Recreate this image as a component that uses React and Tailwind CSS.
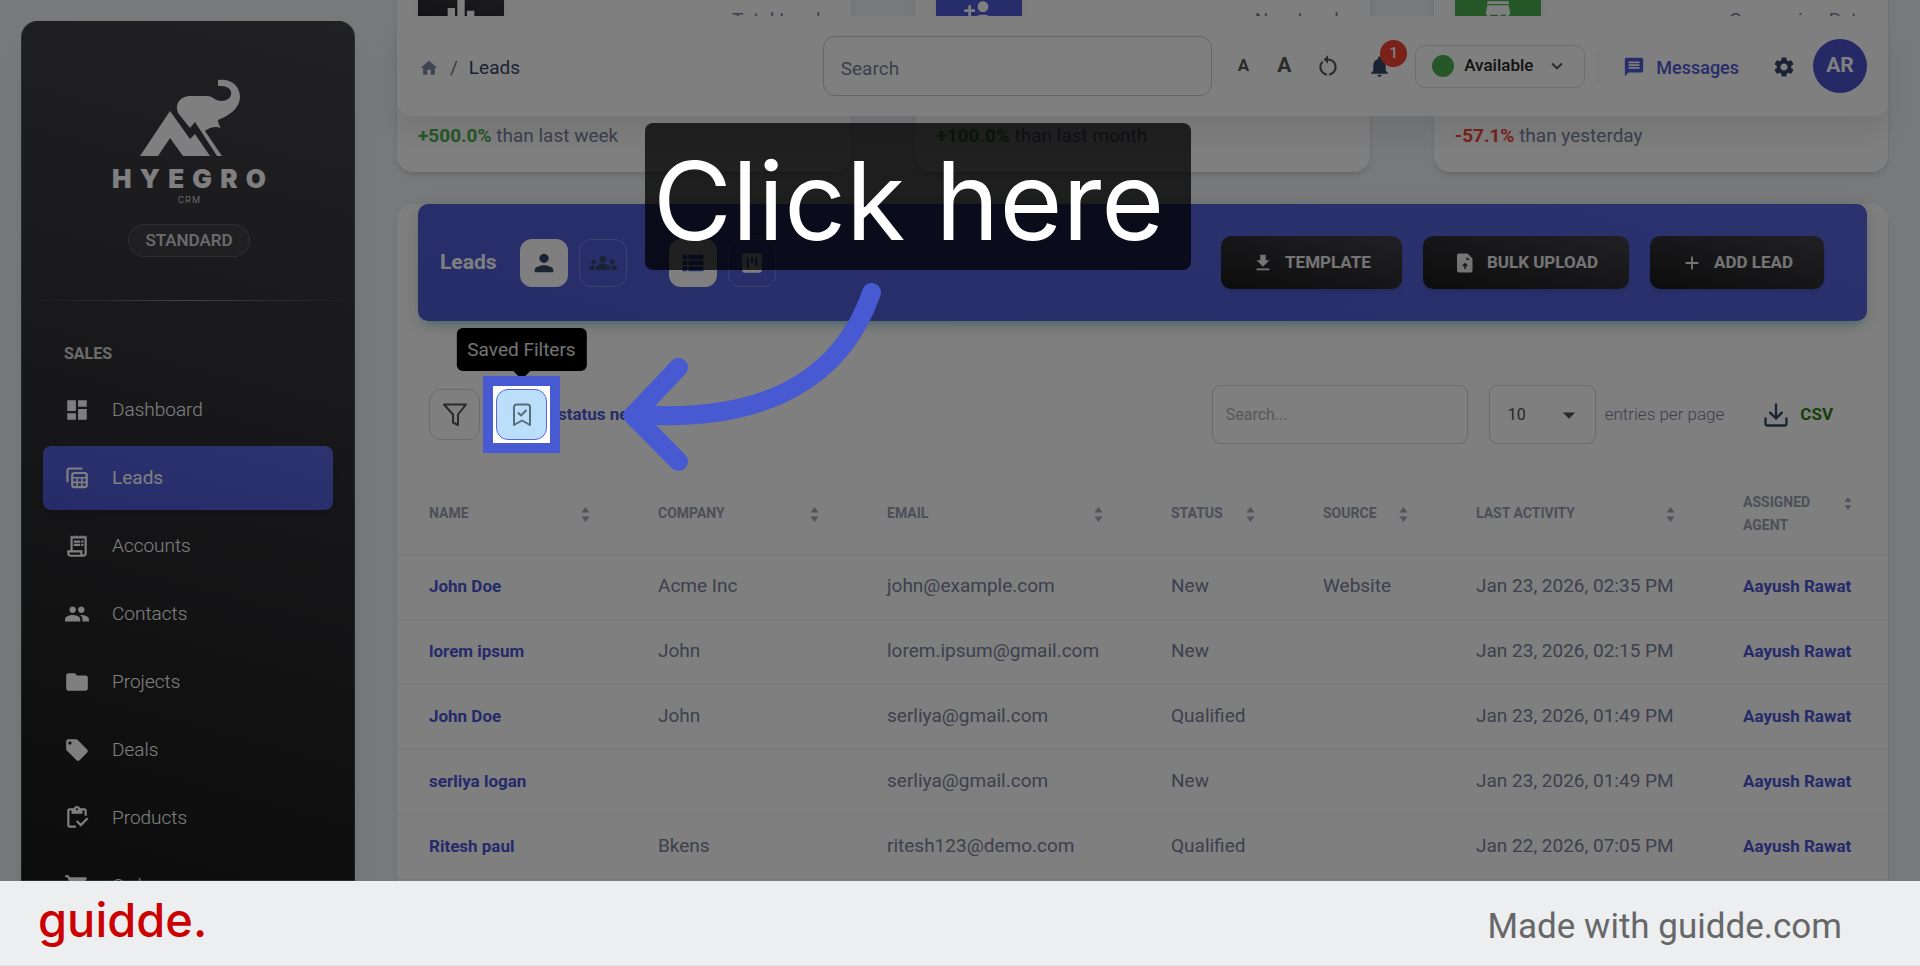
import React from 'react';
import {
  MdAdd,
  MdArrowDropDown,
  MdDashboard,
  MdDownload,
  MdFolder,
  MdGroups,
  MdHome,
  MdKeyboardArrowDown,
  MdLeaderboard,
  MdLocalOffer,
  MdMessage,
  MdNotifications,
  MdOutlineInventory,
  MdOutlineReceiptLong,
  MdPeople,
  MdPerson,
  MdPersonAdd,
  MdRestartAlt,
  MdSettings,
  MdShoppingCart,
  MdStore,
  MdViewKanban,
  MdViewList,
} from 'react-icons/md';
import { Download } from 'lucide-react';

const TablesIcon = ({ size = 26 }) => (
  <svg width={size} height={size} viewBox="0 0 24 24" fill="none" stroke="currentColor" strokeWidth="2">
    <path d="M3.2 16V5.2a2 2 0 0 1 2-2H17" />
    <rect x="7.6" y="7.4" width="13.4" height="13" rx="2" />
    <path d="M7.6 11.8H21M7.6 16H21M12.1 11.8v8.6M16.5 11.8v8.6" strokeWidth="1.5" />
  </svg>
);

const UploadFileIcon = () => (
  <svg width="22" height="20" viewBox="-3 0 22 20" className="mr-[11px]">
    <path d="M2 .5h8.500L15.500 5.500V17.500a2 2 0 0 1-2 2H2a2 2 0 0 1-2-2v-15a2 2 0 0 1 2-2z" fill="currentColor" />
    <path d="M9.500 4l3.500 3h-3.500z" fill="#2a2a30" />
    <path d="M8 16v-5M5.800 13L8 10.800l2.200 2.200" fill="none" stroke="#2a2a30" strokeWidth="1.500" />
  </svg>
);

const MENU = [
  { label: 'Dashboard', icon: MdDashboard },
  { label: 'Leads', icon: TablesIcon, active: true },
  { label: 'Accounts', icon: MdOutlineReceiptLong },
  { label: 'Contacts', icon: MdPeople },
  { label: 'Projects', icon: MdFolder },
  { label: 'Deals', icon: MdLocalOffer },
  { label: 'Products', icon: MdOutlineInventory },
  { label: 'Orders', icon: MdShoppingCart },
];

const STATS = [
  {
    label: 'Total Leads',
    icon: MdLeaderboard,
    box: 'bg-linear-[195deg,#42424a,#191919]',
    change: '+500.0%',
    tone: 'text-[#4caf50]',
    period: 'than last week',
  },
  {
    label: 'New Leads',
    icon: MdPersonAdd,
    box: 'bg-[#4f5bd5]',
    change: '+100.0%',
    tone: 'text-[#4caf50]',
    period: 'than last month',
  },
  {
    label: 'Conversion Rate',
    icon: MdStore,
    box: 'bg-[#4caf50]',
    change: '-57.1%',
    tone: 'text-[#f44335]',
    period: 'than yesterday',
  },
];

const COLUMNS = [
  { label: 'Name', width: 'w-[229px]' },
  { label: 'Company', width: 'w-[229px]' },
  { label: 'Email', width: 'w-[284px]' },
  { label: 'Status', width: 'w-[152px]' },
  { label: 'Source', width: 'w-[153px]' },
  { label: 'Last Activity', width: 'w-[267px]' },
  { label: 'Assigned Agent', width: 'w-[177px]' },
];

const LEADS = [
  ['John Doe', 'Acme Inc', 'john@example.com', 'New', 'Website', 'Jan 23, 2026, 02:35 PM', 'Aayush Rawat'],
  ['lorem ipsum', 'John', 'lorem.ipsum@gmail.com', 'New', '', 'Jan 23, 2026, 02:15 PM', 'Aayush Rawat'],
  ['John Doe', 'John', 'serliya@gmail.com', 'Qualified', '', 'Jan 23, 2026, 01:49 PM', 'Aayush Rawat'],
  ['serliya logan', '', 'serliya@gmail.com', 'New', '', 'Jan 23, 2026, 01:49 PM', 'Aayush Rawat'],
  ['Ritesh paul', 'Bkens', 'ritesh123@demo.com', 'Qualified', '', 'Jan 22, 2026, 07:05 PM', 'Aayush Rawat'],
];

const Logo = () => (
  <div className="flex flex-col items-center text-white">
    <svg width="102" height="78" viewBox="0 0 102 78" fill="currentColor" className="ml-1">
      <path d="M0 77 L30 32 L50 60 L55 55 L70 77 H43 L30 59 L18 77 Z" />
      <path d="M37 30 C36 22 43 17 50 17 H67 C73 17 75 22 81 22 C88 22 92 18 91 13 C90 8 85 7 78 7 V1 C90 -1 100 6 100 18 C100 29 89 37 78 41 C78 44 79 46 81 49 C76 47 70 48 65 52 L82 77 H77 L55 43 L50 49 L38 34 Z" />
    </svg>
    <div className="mt-[6px] flex w-[154px] justify-between font-[Inter,sans-serif] text-[26px] leading-[32px] font-black">
      {'HYEGRO'.split('').map((letter) => (
        <span key={letter}>{letter}</span>
      ))}
    </div>
    <div className="flex w-[22px] justify-between text-[9px] leading-[10px] font-light">
      <span>C</span>
      <span>R</span>
      <span>M</span>
    </div>
  </div>
);

const Sidebar = () => (
  <aside className="mt-[21px] ml-[21px] flex w-[334px] shrink-0 flex-col rounded-t-2xl border border-white/15 bg-linear-[195deg,#42424a,#191919] shadow-xl">
    <div className="flex flex-col items-center pt-[57px] pb-[43px] pl-0.5">
      <Logo />
      <span className="mt-[19px] rounded-full border border-white/15 bg-white/5 px-4 text-[17px] leading-[31px] font-medium text-white/80">
        STANDARD
      </span>
    </div>
    <div className="h-px shrink-0 bg-linear-to-r from-transparent via-white/40 to-transparent" />
    <h6 className="px-[42px] pt-[41px] pb-3 text-[16px] leading-6 font-bold text-white/80">SALES</h6>
    <nav className="flex flex-col gap-1 px-[21px]">
      {MENU.map(({ label, icon: Icon, active }) => (
        <a
          key={label}
          href="#"
          className={
            active
              ? 'flex h-16 shrink-0 items-center gap-[22px] rounded-lg bg-linear-[195deg,#5a67e0,#4c58d2] pl-[21px] text-[19px] text-white shadow-md'
              : 'flex h-16 shrink-0 items-center gap-[22px] rounded-lg pl-[21px] text-[19px] font-light text-white'
          }
        >
          <Icon size={26} />
          {label}
        </a>
      ))}
    </nav>
  </aside>
);

const Navbar = () => (
  <header className="absolute top-4 right-8 left-0 z-10 flex h-[100px] items-center rounded-2xl bg-white pr-[21px] pl-[22px] shadow-[0_20px_27px_rgba(0,0,0,0.08)]">
    <nav className="flex flex-1 items-center pt-1 text-[19px]">
      <a href="#" aria-label="Home" className="text-[#7b8ba5]">
        <MdHome size={20} />
      </a>
      <span className="mx-[11px] text-[#6c757d]">/</span>
      <a href="#" className="text-[#344767]">Leads</a>
    </nav>
    <input
      type="text"
      aria-label="Search"
      placeholder="Search"
      className="h-[60px] w-[389px] rounded-xl border border-[#c9ccd1] px-[17px] pt-1 text-[19px] placeholder:text-[#7b809a]"
    />
    <div className="flex items-center text-[#555]">
      <button className="ml-[26px] text-[17px] font-bold" aria-label="Smaller text">A</button>
      <button className="ml-[28px] text-[21px] font-bold" aria-label="Larger text">A</button>
      <button className="ml-6" aria-label="Reset text size">
        <MdRestartAlt size={26} />
      </button>
    </div>
    <button className="relative ml-[26px] text-[#344767]" aria-label="Notifications">
      <MdNotifications size={25} />
      <span className="absolute -top-[14px] left-[13px] flex h-[27px] w-[27px] items-center justify-center rounded-full bg-[#f44335] text-[15px] font-medium text-white">
        1
      </span>
    </button>
    <button className="ml-[23px] flex h-[43px] w-[170px] items-center rounded-[10px] border border-[#dadce0] pl-4 text-[17px] font-medium text-[#222]">
      <span className="mr-[10px] h-[22px] w-[22px] rounded-full bg-[#4caf50]" />
      <span className="flex-1 text-left">Available</span>
      <MdKeyboardArrowDown size={22} className="mr-4 text-[#555]" />
    </button>
    <span className="ml-[13px] h-8 w-px bg-[#ececec]" />
    <a href="#" className="ml-[24px] flex items-center gap-[11px] pt-0.5 text-[18px] font-medium text-[#4f5bd5]">
      <MdMessage size={22} />
      Messages
    </a>
    <button className="ml-[33px] pt-0.5 text-[#344767]" aria-label="Settings">
      <MdSettings size={24} />
    </button>
    <button className="ml-[17px] h-[54px] w-[54px] rounded-full bg-[#4a54ce] text-[21px] font-bold text-white">AR</button>
  </header>
);

const StatCard = ({ label, icon: Icon, box, change, tone, period }) => (
  <div className="flex h-[232px] flex-col justify-between rounded-2xl bg-white px-[21px] pt-[29px] pb-[22px] shadow-md">
    <div className="flex justify-between">
      <div className={`flex h-[86px] w-[86px] items-center justify-center rounded-xl text-white shadow-lg ${box}`}>
        <Icon size={32} />
      </div>
      <p className="pt-[37px] text-[19px] leading-7 text-[#7b809a]">{label}</p>
    </div>
    <p className="text-[19px] leading-7 text-[#7b809a]">
      <span className={`font-bold ${tone}`}>{change}</span> {period}
    </p>
  </div>
);

const iconToggle = 'flex h-12 w-12 items-center justify-center rounded-xl';
const darkButton =
  'flex h-[53px] items-center rounded-[10px] bg-linear-[195deg,#42424a,#191919] px-[31px] text-[17px] font-bold text-white/90 shadow-md';

const Banner = () => (
  <div className="mx-[21px] -mt-8 flex h-[117px] items-center rounded-[10px] bg-linear-[195deg,#5865de,#4c5ad2] pr-[43px] pl-[22px] shadow-[0_4px_20px_rgba(0,0,0,0.14),0_7px_10px_-5px_rgba(0,187,212,0.4)]">
    <h1 className="mr-[23px] text-[21px] font-bold text-white">Leads</h1>
    <div className="flex gap-[11px]">
      <button className={`${iconToggle} bg-white text-[#344767]`} aria-label="My leads">
        <MdPerson size={28} />
      </button>
      <button className={`${iconToggle} border border-white/25 text-[#344767]`} aria-label="Team leads">
        <MdGroups size={28} />
      </button>
    </div>
    <div className="ml-[42px] flex gap-[11px]">
      <button className={`${iconToggle} bg-white text-[#4f5bd5]`} aria-label="List view">
        <MdViewList size={28} />
      </button>
      <button className={`${iconToggle} border border-white/25 text-white`} aria-label="Board view">
        <MdViewKanban size={26} />
      </button>
    </div>
    <div className="ml-auto flex gap-[21px]">
      <button className={darkButton}>
        <MdDownload size={22} className="mr-[11px]" />
        TEMPLATE
      </button>
      <button className={darkButton}>
        <UploadFileIcon />
        BULK UPLOAD
      </button>
      <button className={darkButton}>
        <MdAdd size={22} className="mr-[11px]" />
        ADD LEAD
      </button>
    </div>
  </div>
);

const SavedFilters = () => (
  <div className="relative">
    <button
      className="flex h-[51px] w-[51px] items-center justify-center rounded-xl border border-[#5b66d8] bg-[#bbdefb] text-[#546e7a]"
      aria-label="Saved Filters"
    >
      <svg width="20" height="24" viewBox="0 0 20 24" fill="none" stroke="currentColor" strokeWidth="2" strokeLinejoin="round">
        <path d="M2 22V4a2.5 2.5 0 0 1 2.5-2.5h11A2.5 2.5 0 0 1 18 4v18l-8-4.5z" />
        <path d="M6 9.5l3 3 5.500-5.500" />
      </svg>
    </button>
    <div role="tooltip" className="absolute bottom-[69px] left-1/2 z-20 -translate-x-1/2 rounded-md bg-black px-[11px] text-[19px] leading-[43px] whitespace-nowrap text-white/90">
      Saved Filters
      <span className="absolute -bottom-1.5 left-1/2 h-3 w-3 -translate-x-1/2 rotate-45 bg-black" />
    </div>
    <Walkthrough />
  </div>
);

// the ring's huge shadow dims everything on the page except its own inside
const Walkthrough = () => (
  <>
    <div className="pointer-events-none absolute -inset-[13px] z-30 border-10 border-[#475ad2] shadow-[0_0_0_3000px_rgba(0,0,0,0.5)]" />
    <div className="absolute -top-[266px] left-[149px] z-40 flex h-[147px] w-[546px] items-center rounded-lg bg-black/75 pt-2 pl-2 font-[Inter,sans-serif] text-[108px] whitespace-nowrap text-white">
      Click here
    </div>
    <svg
      className="pointer-events-none absolute -top-[109px] left-[124px] z-40"
      width="264"
      height="194"
      viewBox="620 280 264 194"
      fill="none"
      stroke="#475ad2"
      strokeWidth="19"
      strokeLinecap="round"
      strokeLinejoin="round"
    >
      <path d="M871.500 292.500C843 375 770 424 634 414.500" />
      <path d="M678.500 367.500L633 415.500L678.500 461.500" />
    </svg>
  </>
);

const Toolbar = () => (
  <div className="flex items-center pt-16 pr-[55px] pb-[26px] pl-8">
    <button className="mr-4 flex h-[51px] w-[51px] items-center justify-center rounded-xl border border-[#d2d6da] text-[#555]" aria-label="Filter">
      <svg width="26" height="24" viewBox="0 0 26 24" fill="none" stroke="currentColor" strokeWidth="2" strokeLinejoin="round">
        <path d="M2 1.500h22l-8 10v10.500l-5-2.500v-8z" />
      </svg>
    </button>
    <SavedFilters />
    <a href="#" className="ml-[11px] text-[17px] font-bold text-[#4f5bd5]">status new</a>
    <input
      type="text"
      aria-label="Search leads"
      placeholder="Search..."
      className="ml-auto h-[59px] w-64 rounded-lg border border-[#d2d6da] px-[13px] text-[16px] placeholder:text-[#adb1b8]"
    />
    <div className="relative ml-[21px]">
      <select
        id="page-size"
        defaultValue="10"
        className="h-[59px] w-[107px] appearance-none rounded-lg border border-[#d2d6da] pl-[18px] text-[16px] text-[#495057]"
      >
        <option>10</option>
        <option>25</option>
        <option>50</option>
      </select>
      <MdArrowDropDown size={30} className="pointer-events-none absolute top-[15px] right-3 text-[#555]" />
    </div>
    <label htmlFor="page-size" className="ml-[9px] text-[17px] font-light text-[#7b809a]">
      entries per page
    </label>
    <button className="ml-[38px] flex items-center gap-[10px] text-[17px] font-bold text-[#2e7d12]">
      <Download size={28} strokeWidth={2} className="text-[#344767]" />
      CSV
    </button>
  </div>
);

const SortIcon = () => (
  <svg width="9" height="15" viewBox="0 0 9 15" fill="#a4a8b8" className="mt-[5px]">
    <path d="M4.500 0L8.500 5.500h-8zM4.500 15L8.500 9.500h-8z" />
  </svg>
);

const LeadsTable = () => (
  <table className="w-full table-fixed text-left">
    <thead>
      <tr className="h-[84px] border-b border-[#f0f2f5]">
        {COLUMNS.map(({ label, width }) => (
          <th key={label} className={`pt-1 pr-9 pl-8 ${width}`}>
            <div className="flex items-start justify-between text-[14px] leading-[23px] font-bold text-[#9a9eb1] uppercase">
              {label}
              <SortIcon />
            </div>
          </th>
        ))}
      </tr>
    </thead>
    <tbody>
      {LEADS.map((lead, row) => (
        <tr key={row} className="h-[65px] border-b border-[#f0f2f5]">
          {lead.map((value, col) => (
            <td key={col} className="pl-8 text-[19px] whitespace-nowrap text-[#7b809a]">
              {col === 0 || col === 6 ? (
                <a href="#" className="text-[17px] font-bold text-[#4a55d4]">{value}</a>
              ) : (
                value
              )}
            </td>
          ))}
        </tr>
      ))}
    </tbody>
  </table>
);

const App = () => (
  <div className="flex h-screen flex-col bg-[#f0f2f5] font-[Roboto,sans-serif]">
    <div className="relative flex flex-1 overflow-hidden">
      <Sidebar />
      <main className="relative ml-[42px] min-w-0 flex-1 pr-8">
        <Navbar />
        <section className="-mt-[60px] grid grid-cols-3 gap-16">
          {STATS.map((stat) => (
            <StatCard key={stat.label} {...stat} />
          ))}
        </section>
        <section className="mt-16 rounded-2xl bg-white pb-12 shadow-md">
          <Banner />
          <Toolbar />
          <LeadsTable />
        </section>
      </main>
    </div>
    <footer className="flex h-[85px] shrink-0 items-center justify-between border-b border-[#dfe1e3] bg-[#edeef0] pr-[78px] pl-[38px]">
      <span className="pb-2 font-[Inter,sans-serif] text-[47px] leading-none font-medium text-[#cb0000]">guidde.</span>
      <span className="pt-2 text-[35px] text-[#666769]">Made with guidde.com</span>
    </footer>
  </div>
);

export default App;
